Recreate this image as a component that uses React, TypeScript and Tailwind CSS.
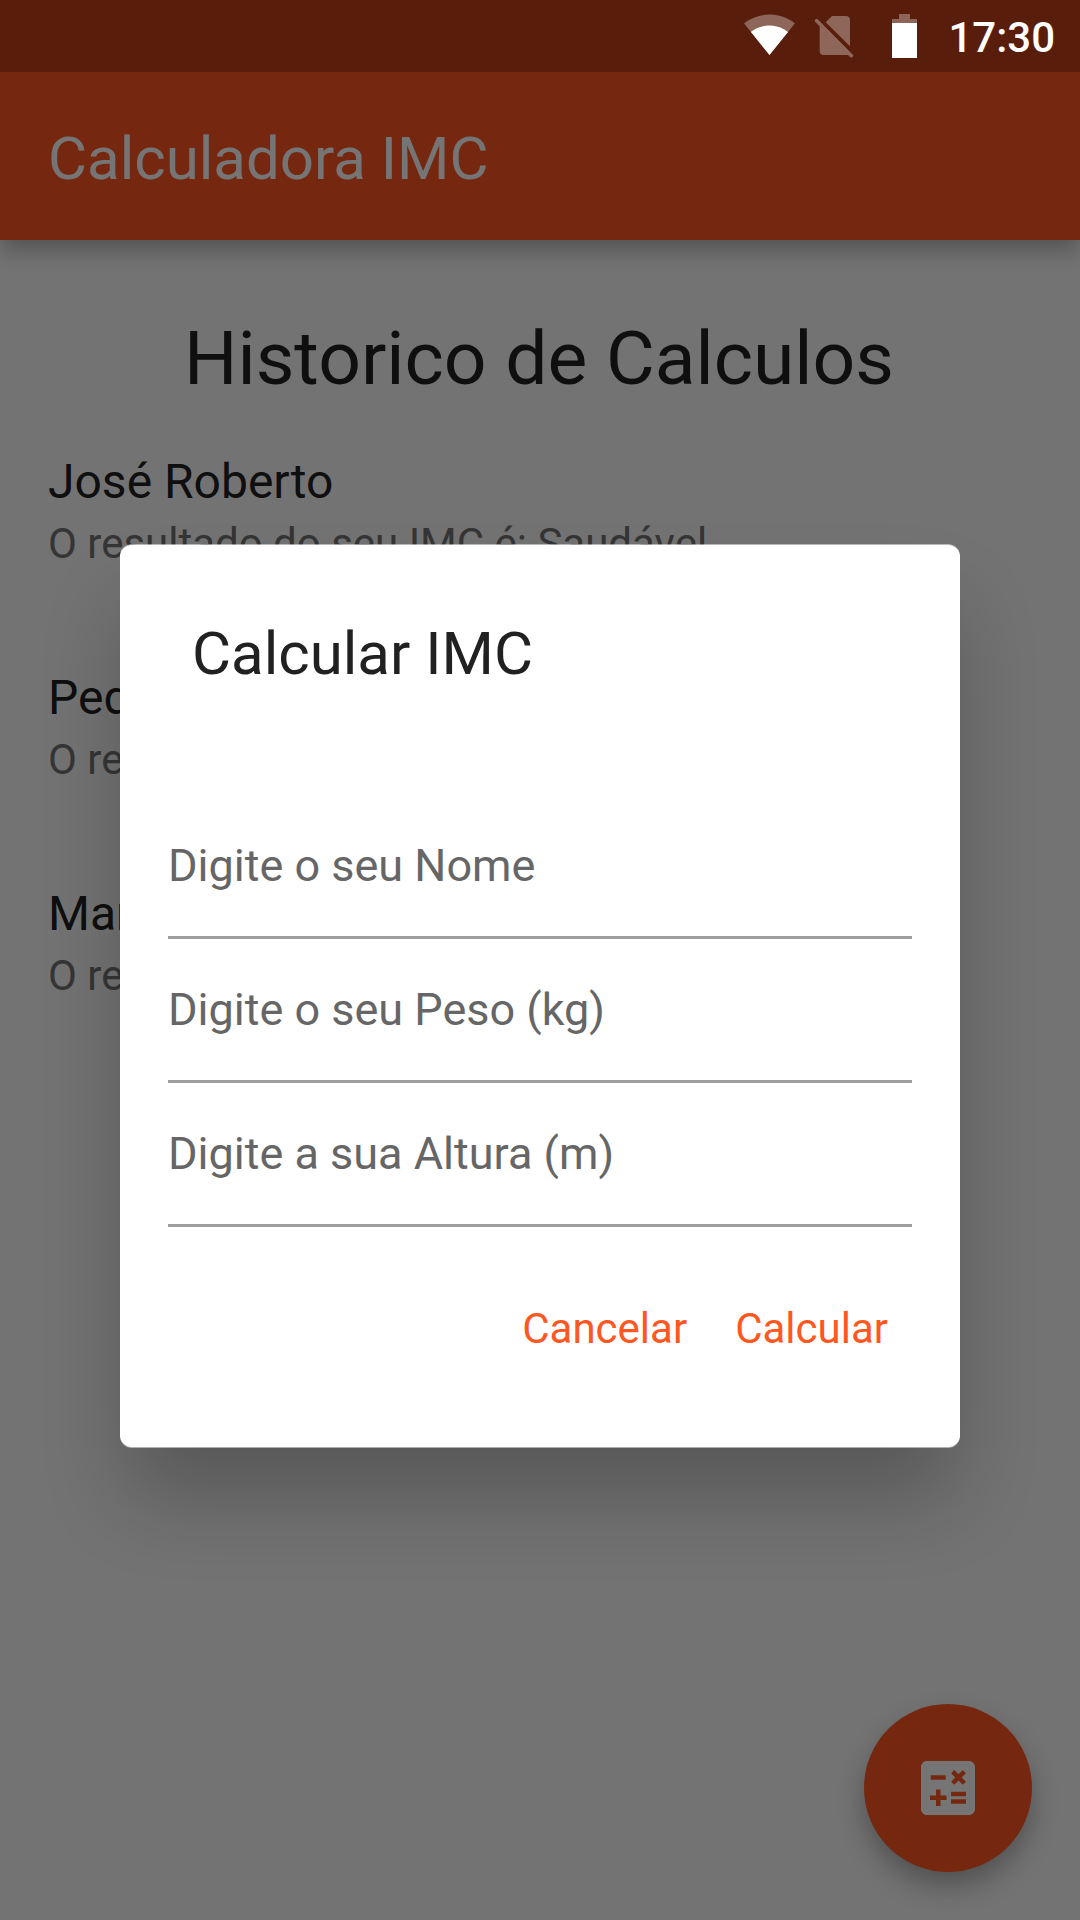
import { MdCalculate } from "react-icons/md";

const history = ["José Roberto", "Pedro", "Maria"];
const fields = ["Digite o seu Nome", "Digite o seu Peso (kg)", "Digite a sua Altura (m)"];

function WifiIcon() {
  return (
    <svg className="mt-3.5 h-[42px] w-[52px]" viewBox="72 42 156 126" fill="#fff">
      <g transform="translate(69.6 23.8) scale(6.57)">
        <path fillOpacity=".32" d="M12.01 21.49L23.64 7c-.45-.34-4.93-4-11.64-4C5.28 3 .81 6.66.36 7l11.63 14.49.01.01.01-.01z" />
        <path d="M3.53 10.95l8.46 10.54.01.01.01-.01 8.46-10.54C20.04 10.62 16.81 8 12 8c-4.81 0-8.04 2.62-8.47 2.95z" />
      </g>
    </svg>
  );
}

function NoSimIcon() {
  return (
    <svg className="mt-3 ml-[18px] h-12 w-10" viewBox="282 36 120 144">
      <g opacity=".32">
        <path fill="#fff" d="M317 67L336 48H377Q390 48 390 61V139Z" />
        <path fill="#fff" d="M299 70L386 157V165H312Q299 165 299 152Z" />
        <path stroke="#fff" strokeWidth="11" strokeLinecap="round" d="M290 62L394 167" />
      </g>
    </svg>
  );
}

function BatteryIcon() {
  return (
    <svg className="mt-3.5 ml-[38px] h-11 w-[25px]" viewBox="0 0 25 44" fill="#fff">
      <path fillOpacity=".32" d="M7 0h11v5h7v4H0V5h7z" />
      <path d="M0 9h25v35H0z" />
    </svg>
  );
}

export default function App() {
  return (
    <div className="relative h-[1920px] w-[1080px] overflow-hidden bg-[#fafafa] font-['Roboto',sans-serif] text-[#212121]">
      <div className="flex h-full flex-col">
        <header className="z-10 shrink-0 bg-[#ff5722] shadow-[0_11px_20px_-1px_rgba(0,0,0,0.28)]">
          <div className="h-[72px] bg-black/25" />
          <div className="h-[168px] px-12 pt-[51px]">
            <h1 className="text-[60px] leading-[71px] text-white">Calculadora IMC</h1>
          </div>
        </header>
        <main className="flex-1">
          <h2 className="mt-[74px] pr-0.5 text-center text-[75px] leading-[88px]">Historico de Calculos</h2>
          <ul className="mt-9 px-12">
            {history.map((name) => (
              <li key={name} className="h-[216px] pt-[15px]">
                <p className="text-[48px] leading-[57px]">{name}</p>
                <p className="mt-[9px] text-[42px] leading-[49px] text-[#737373]">O resultado do seu IMC é: Saudável</p>
              </li>
            ))}
          </ul>
        </main>
      </div>

      <button className="absolute right-12 bottom-12 flex size-[168px] items-center justify-center rounded-full bg-[#ff5722] text-white shadow-[0_14px_28px_-1px_rgba(0,0,0,0.3)]">
        <MdCalculate className="size-[72px]" />
      </button>

      <div className="absolute inset-0 z-20 flex flex-col bg-black/54">
        <div className="flex h-[72px] shrink-0 items-start justify-end pr-[25px]">
          <WifiIcon />
          <NoSimIcon />
          <BatteryIcon />
          <span className="mt-[13px] w-[138px] text-right text-[42px] leading-[49px] font-medium text-white">17:30</span>
        </div>
        <div className="flex flex-1 items-center justify-center">
          <section className="h-[902px] w-[840px] rounded-[12px] bg-white px-12 shadow-[0_-1px_0_rgba(255,255,255,0.5),0_1px_0_rgba(255,255,255,0.5),0_56px_84px_-6px_rgba(0,0,0,0.24)]">
            <h2 className="px-6 pt-[73px] text-[60px] leading-[71px]">Calcular IMC</h2>
            <form className="mt-[106px]">
              {fields.map((label) => (
                <label key={label} className="block h-36 border-b-3 border-[#9e9e9e] pt-11 text-[45px] leading-[53px] text-[#666]">
                  {label}
                </label>
              ))}
            </form>
            <div className="mt-[77px] flex justify-end gap-12 px-6 text-[42px] leading-[49px] text-[#ff5722]">
              <button>Cancelar</button>
              <button>Calcular</button>
            </div>
          </section>
        </div>
      </div>
    </div>
  );
}
